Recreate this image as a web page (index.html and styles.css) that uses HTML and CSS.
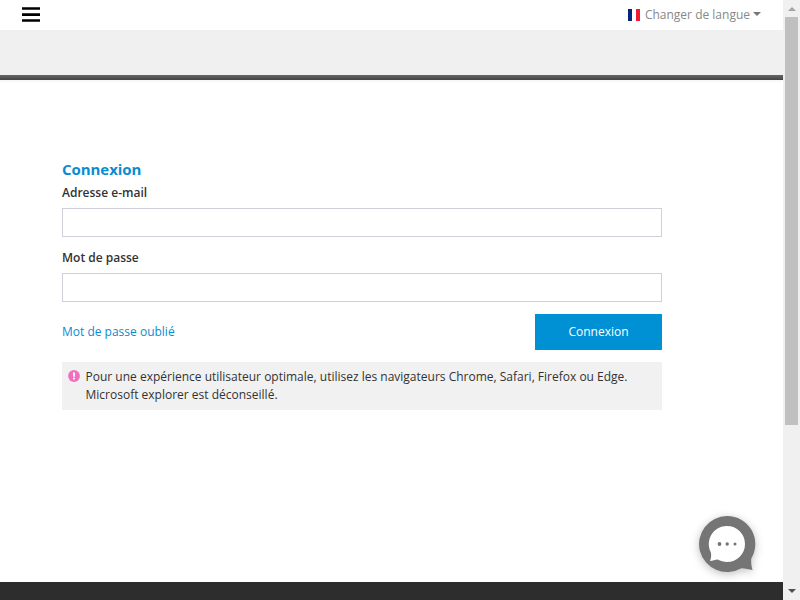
FILE: index.html
```html
<!DOCTYPE html>
<html lang="fr">
<head>
<meta charset="utf-8">
<title>Connexion</title>
<link rel="stylesheet" href="styles.css">
</head>
<body>
<div class="page">
  <header class="topbar">
    <button class="menu" type="button">
      <svg width="18" height="16" viewBox="0 0 18 16"><path d="M0 0.3h18v2.400H0zM0 6.200h18v2.700H0zM0 12.300h18v2.500H0z"/></svg>
    </button>
    <div class="language">
      <svg class="flag" width="12" height="12" viewBox="0 0 12 12"><path fill="#fff" d="M0 0h12v12H0z"/><path fill="#00267f" d="M0 0h4v12H0z"/><path fill="#f31830" d="M8 0h4v12H8z"/></svg>
      <span class="language-label">Changer de langue</span>
      <span class="caret"></span>
    </div>
  </header>
  <div class="band"></div>
  <div class="rule"></div>
  <main class="content">
    <form class="login">
      <h1>Connexion</h1>
      <label for="email">Adresse e-mail</label>
      <input id="email" type="text">
      <label for="password">Mot de passe</label>
      <input id="password" type="password">
      <div class="actions">
        <a class="forgot">Mot de passe oublié</a>
        <button class="submit" type="button">Connexion</button>
      </div>
      <div class="notice">
        <svg class="alert" width="12" height="12" viewBox="0 0 12 12"><circle cx="6" cy="6" r="5.900" fill="#f26fbf"/><path fill="#fff" d="M4.900 2.400h2.200L6.800 6.800H5.200z"/><circle cx="6" cy="8.600" r="1.100" fill="#fff"/></svg>
        <p>Pour une expérience utilisateur optimale, utilisez les navigateurs Chrome, Safari, Firefox ou Edge.<br>Microsoft explorer est déconseillé.</p>
      </div>
    </form>
  </main>
  <footer class="footer"></footer>
  <svg class="chat" width="56" height="56" viewBox="0 0 56 56">
    <path fill="#757575" d="M28 0a28 28 0 1 0 13.800 52.400c3.500-.5 7.500 1.300 11.700 1.500-.9-3.200-1.700-6.900-1.200-11.500A28 28 0 0 0 28 0z"/>
    <path fill="#fff" d="M28 10a18 18 0 0 1 0 36c-3.400 0-6.400-.9-9.200-2.500-2.600.3-5.100 1.500-7.800 1.500 1-2.300 1.500-4.800.9-8.500A18 18 0 0 1 28 10z"/>
    <g fill="#757575"><circle cx="20.500" cy="28" r="1.900"/><circle cx="28.200" cy="28" r="1.700"/><circle cx="36" cy="28" r="1.500"/></g>
  </svg>
</div>
<div class="scrollbar">
  <span class="arrow up"></span>
  <span class="thumb"></span>
  <span class="arrow down"></span>
</div>
</body>
</html>
```
FILE: styles.css
```css
* { box-sizing: border-box; }
body {
  margin: 0;
  height: 600px;
  display: grid;
  grid-template-columns: 783px 17px;
  overflow: hidden;
  background: #fff;
  color: #333;
  font: 12px/18px "Open Sans", sans-serif;
}
.page { display: flex; flex-direction: column; height: 600px; position: relative; }
.topbar {
  height: 30px;
  padding: 0 22px;
  display: flex;
  align-items: center;
  justify-content: space-between;
}
.menu { display: flex; padding: 0; border: 0; background: none; }
.language { display: flex; align-items: center; color: #888; }
.language-label { margin-left: 5px; font-size: 12px; }
.caret {
  margin: -2px 0 0 3px;
  border: 4px solid transparent;
  border-top: 4px solid #777;
  border-bottom: 0;
}
.band { height: 45px; background: #f0f0f0; }
.rule {
  height: 5px;
  background: linear-gradient(#666, #444);
  box-shadow: 0 1px 3px rgba(0, 0, 0, .06);
}
.content { flex: 1; padding: 79px 0 0 62px; }
.login { width: 600px; display: flex; flex-direction: column; }
h1 { margin: 0 0 1px; font-size: 15px; line-height: 20px; font-weight: 700; letter-spacing: -.05px; color: #0b8bd0; }
label { margin: 4px 0 6px; font-weight: 600; }
input {
  height: 29px;
  margin-bottom: 8px;
  padding: 0 8px;
  border: 1px solid #ced0da;
  background: #fff;
}
.actions {
  height: 36px;
  margin-top: 4px;
  display: flex;
  align-items: center;
  justify-content: space-between;
}
.forgot { color: #0b8bd0; }
.submit {
  width: 127px;
  height: 36px;
  border: 0;
  background: #0091d4;
  color: #fff;
  font: 400 12px/18px "Open Sans", sans-serif;
}
.notice {
  margin-top: 12px;
  height: 48px;
  padding: 6px 5.5px;
  display: flex;
  background: #f1f1f1;
}
.alert { flex: none; margin: 2px 6px 0 0; }
.notice p { margin: 0; white-space: nowrap; }
.footer { height: 18px; background: #2d2d2d; }
.chat {
  position: absolute;
  right: 28px;
  bottom: 28px;
  overflow: visible;
  filter: drop-shadow(0 2px 4px rgba(0, 0, 0, .25));
}
.scrollbar {
  height: 600px;
  display: flex;
  flex-direction: column;
  align-items: center;
  background: #f0f0f0;
}
.thumb { width: 13px; height: 408px; margin-top: 6px; background: #c0c0c0; }
.arrow { border: 4px solid transparent; }
.up { margin-top: 7px; border-top: 0; border-bottom-color: #a3a3a3; }
.down { margin: auto 0 7px; border-bottom: 0; border-top-color: #505050; }
```
